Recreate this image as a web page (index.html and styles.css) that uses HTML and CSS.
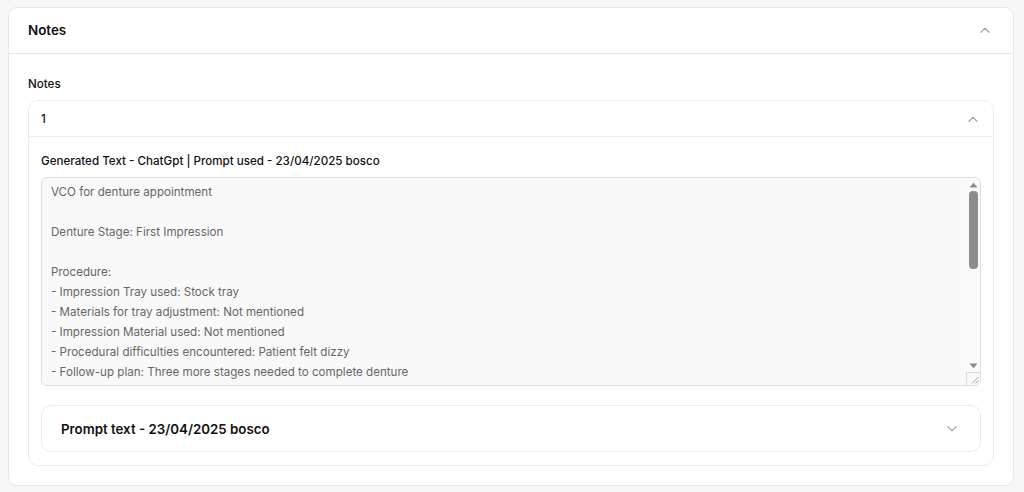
FILE: index.html
```html
<!DOCTYPE html>
<html lang="en">
<head>
<meta charset="utf-8">
<title>Notes</title>
<link rel="stylesheet" href="styles.css">
</head>
<body>
<div class="page">
  <section class="card">
    <header class="card-head">
      <h2 class="card-title">Notes</h2>
      <svg class="chev" width="10" height="6" viewBox="0 0 10 6"><path d="M1 5.2 L5 1.2 L9 5.2" fill="none" stroke="#a8a8a8" stroke-width="1.3" stroke-linecap="round" stroke-linejoin="round"/></svg>
    </header>
    <div class="card-body">
      <div class="field-label">Notes</div>
      <div class="note">
        <div class="note-head">
          <span class="note-num">1</span>
          <svg class="chev" width="10" height="6" viewBox="0 0 10 6"><path d="M1 5.2 L5 1.2 L9 5.2" fill="none" stroke="#a8a8a8" stroke-width="1.3" stroke-linecap="round" stroke-linejoin="round"/></svg>
        </div>
        <div class="note-body">
          <div class="gen-label">Generated Text - ChatGpt | Prompt used - 23/04/2025 bosco</div>
          <div class="text-wrap">
            <textarea class="gen-text" readonly>VCO for denture appointment

Denture Stage: First Impression

Procedure:
- Impression Tray used: Stock tray
- Materials for tray adjustment: Not mentioned
- Impression Material used: Not mentioned
- Procedural difficulties encountered: Patient felt dizzy
- Follow-up plan: Three more stages needed to complete denture

Medical History:
- Patient reported feeling dizzy during procedure
- No other changes reported

Consent:
- Patient consented to the procedure after discussion of options

Additional Notes:
- Patient advised to rest before leaving the practice
- Next appointment to be booked at reception
- Patient informed of the remaining stages
- Oral hygiene instructions given</textarea>
            <div class="sbar" aria-hidden="true">
              <div class="sbar-btn">
                <svg width="9" height="6" viewBox="0 0 9 6"><path d="M0.5 5.5 L4.5 0.8 L8.5 5.5 Z" fill="#8a8a8a"/></svg>
              </div>
              <div class="sbar-track"><div class="sbar-thumb"></div></div>
              <div class="sbar-btn">
                <svg width="9" height="6" viewBox="0 0 9 6"><path d="M0.5 0.5 L4.5 5.2 L8.5 0.5 Z" fill="#8a8a8a"/></svg>
              </div>
              <div class="sbar-corner">
                <svg width="8" height="8" viewBox="0 0 8 8"><path d="M7.5 1 L1 7.5 M7.5 4.5 L4.5 7.5" stroke="#9a9a9a" stroke-width="0.9" fill="none"/></svg>
              </div>
            </div>
          </div>
          <div class="prompt">
            <span class="prompt-title">Prompt text - 23/04/2025 bosco</span>
            <svg class="chev" width="10" height="6" viewBox="0 0 10 6"><path d="M1 0.8 L5 4.8 L9 0.8" fill="none" stroke="#a8a8a8" stroke-width="1.3" stroke-linecap="round" stroke-linejoin="round"/></svg>
          </div>
        </div>
      </div>
    </div>
  </section>
</div>
</body>
</html>
```

FILE: styles.css
```css
* { box-sizing: border-box; }
html, body { margin: 0; padding: 0; }
body {
  background: #f7f7f7;
  font-family: Inter, "Noto Sans", sans-serif;
  color: #111;
}
.page {
  padding: 7px 10px 7px 8px;
}
.card {
  background: #fff;
  border: 1px solid #e8e8e8;
  border-radius: 9px;
}
.card-head {
  height: 46px;
  display: flex;
  align-items: center;
  justify-content: space-between;
  padding: 0 23px 1px 19px;
  border-bottom: 1px solid #e6e6e6;
}
.card-title {
  margin: 0;
  font-size: 13.4px;
  font-weight: 600;
  line-height: 20px;
}
.chev { display: block; }
.card-body {
  padding: 22px 19px 19px 19px;
}
.field-label {
  font-size: 11.6px;
  font-weight: 500;
  line-height: 16px;
  margin-bottom: 8px;
}
.note {
  border: 1px solid #ececec;
  border-radius: 10px;
}
.note-head {
  height: 36px;
  display: flex;
  align-items: center;
  justify-content: space-between;
  padding: 0 15px 0 12px;
  border-bottom: 1px solid #efefef;
  font-size: 11.6px;
  font-weight: 500;
}
.note-body {
  padding: 16px 12px 13px 12px;
}
.gen-label {
  font-size: 11.6px;
  font-weight: 500;
  line-height: 16px;
  margin-bottom: 8px;
}
.text-wrap {
  position: relative;
}
.gen-text {
  display: block;
  width: 100%;
  height: 209px;
  margin: 0;
  padding: 4px 24px 3px 9px;
  background: #f9f9f9;
  border: 1px solid #dedede;
  border-radius: 6px;
  font-family: Inter, "Noto Sans", sans-serif;
  font-size: 11.6px;
  line-height: 20px;
  color: #676767;
  resize: none;
  outline: none;
  overflow: hidden;
}
.sbar {
  position: absolute;
  top: 1px;
  right: 1px;
  bottom: 1px;
  width: 13px;
  display: flex;
  flex-direction: column;
  background: #fafafa;
  border-top-right-radius: 5px;
  border-bottom-right-radius: 5px;
}
.sbar-btn {
  height: 13px;
  display: flex;
  align-items: center;
  justify-content: center;
}
.sbar-btn svg { display: block; }
.sbar-track {
  flex: 1;
  padding: 0 2px;
}
.sbar-thumb {
  height: 78px;
  background: #8d8d8d;
  border-radius: 4px;
}
.sbar-corner {
  height: 13px;
  margin-left: -1px;
  border-left: 1px solid #dcdcdc;
  border-top: 1px solid #dcdcdc;
  background: #f9f9f9;
  display: flex;
  align-items: flex-end;
  justify-content: flex-end;
  padding: 0 1px 1px 0;
  border-bottom-right-radius: 5px;
}
.sbar-corner svg { display: block; }
.prompt {
  margin-top: 19px;
  height: 47px;
  display: flex;
  align-items: center;
  justify-content: space-between;
  padding: 0 23px 0 19px;
  border: 1px solid #ececec;
  border-radius: 10px;
}
.prompt-title {
  font-size: 13.3px;
  font-weight: 600;
  line-height: 20px;
}
```
